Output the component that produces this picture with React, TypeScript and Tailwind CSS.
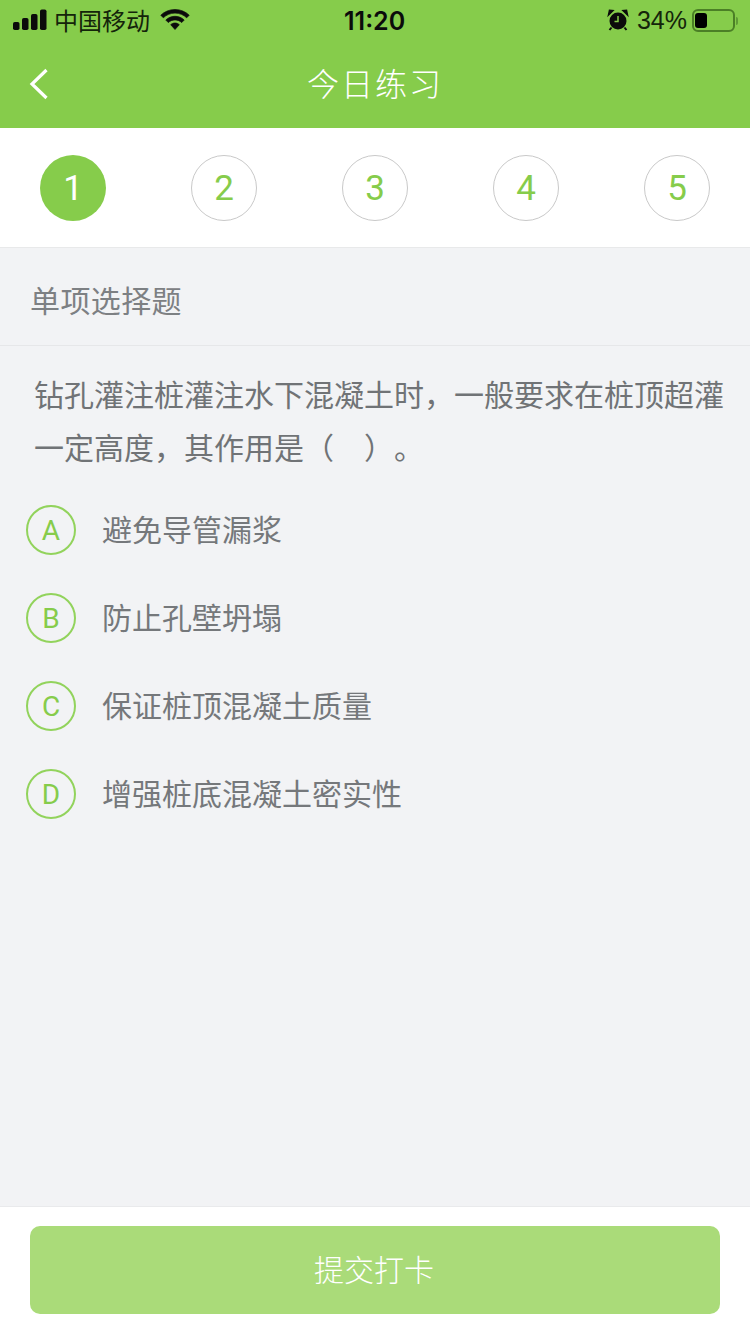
import React from "react";

const cjk = { fontFamily: '"Noto Sans CJK SC", sans-serif' };
const roboto = { fontFamily: '"Roboto", sans-serif' };

function StatusBar() {
  return (
    <div className="relative flex h-10 items-center justify-between pl-[13px] pr-[12px] text-black">
      <div className="flex items-center">
        <svg width="34" height="22" viewBox="0 0 34 22" fill="#0b0b0b" className="mr-[7px]">
          <rect x="0" y="13" width="6.500" height="8" rx="1.800" />
          <rect x="9" y="9" width="6.500" height="12" rx="1.800" />
          <rect x="18" y="5" width="6.500" height="16" rx="1.800" />
          <rect x="27" y="0.500" width="6.500" height="20.500" rx="1.800" />
        </svg>
        <span className="text-[24px] leading-none text-[#14240a]">中国移动</span>
        <svg width="30" height="22" viewBox="0 0 30 22" className="ml-[10px]" fill="#0b0b0b" stroke="#0b0b0b" strokeWidth="0.700">
          <path d="M15 0.500C9.500 0.500 4.500 2.600 0.800 6.200L3.300 8.800C6.300 5.900 10.400 4.100 15 4.100C19.600 4.100 23.700 5.900 26.700 8.800L29.200 6.200C25.500 2.600 20.500 0.500 15 0.500Z" />
          <path d="M15 7.300C11.400 7.300 8.200 8.700 5.800 11L8.300 13.600C10 11.900 12.400 10.900 15 10.900C17.600 10.900 20 11.900 21.700 13.600L24.200 11C21.800 8.700 18.600 7.300 15 7.300Z" />
          <path d="M15 14C13.300 14 11.800 14.700 10.700 15.700L15 20.500L19.300 15.700C18.200 14.700 16.700 14 15 14Z" />
        </svg>
      </div>
      <span
        className="absolute left-[344px] top-[7px] text-[25px] leading-[28px] font-semibold text-[#0b0b0b]"
        style={{ fontFamily: '"Inter", sans-serif' }}
      >
        11:20
      </span>
      <div className="flex items-center pt-[1px]">
        <svg width="22" height="22" viewBox="0 0 22 22" className="mr-[8px] -mt-[2px]">
          <circle cx="11" cy="12" r="8.500" fill="#0b0b0b" />
          <path d="M11 7V12.500H7.500" stroke="#86cc4b" strokeWidth="1.500" fill="none" />
          <path d="M1.500 6L6 1.500L2.500 1.200Z M20.500 6L16 1.500L19.500 1.200Z" fill="#0b0b0b" stroke="#0b0b0b" strokeWidth="1.500" />
          <path d="M4.500 18.500L2.500 21M17.500 18.500L19.500 21" stroke="#0b0b0b" strokeWidth="2" />
        </svg>
        <span
          className="mr-[5px] text-[25px] leading-none text-[#14240a]"
          style={{ fontFamily: '"Liberation Sans", sans-serif' }}
        >
          34%
        </span>
        <div className="flex h-[23px] w-[43px] items-center rounded-[6px] border-2 border-[#4b7f26] p-[1px]">
          <div className="h-[15px] w-[12px] rounded-[3px] bg-black" />
        </div>
        <div className="ml-[1px] h-[8px] w-[2px] rounded-r-[2px] bg-[#5f9a35]" />
      </div>
    </div>
  );
}

function NavBar() {
  return (
    <div className="relative flex h-[88px] items-center justify-center pb-[4px]">
      <svg width="22" height="34" viewBox="0 0 22 34" className="absolute left-[28px] top-[27px]" fill="none" stroke="#fff" strokeWidth="3.200">
        <path d="M18.500 3L4 17L18.500 31" />
      </svg>
      <span className="text-[32px] leading-none tracking-[2px] text-white font-light">今日练习</span>
    </div>
  );
}

function Steps() {
  const items = [1, 2, 3, 4, 5];
  return (
    <div className="flex h-[120px] items-start justify-between border-b border-[#e8e9ea] bg-white px-10 pt-[27px]">
      {items.map((n) =>
        n === 1 ? (
          <div key={n} className="flex h-[66px] w-[66px] items-center justify-center rounded-full bg-[#86cc4b] pt-[2px] text-[35px] text-white" style={roboto}>
            {n}
          </div>
        ) : (
          <div key={n} className="flex h-[66px] w-[66px] items-center justify-center rounded-full border border-[#c9c9c9] pt-[2px] text-[35px] text-[#86cc4b]" style={roboto}>
            {n}
          </div>
        )
      )}
    </div>
  );
}

const options = [
  ["A", "避免导管漏浆"],
  ["B", "防止孔壁坍塌"],
  ["C", "保证桩顶混凝土质量"],
  ["D", "增强桩底混凝土密实性"],
];

export default function App() {
  return (
    <div className="flex h-[1334px] w-[750px] flex-col overflow-hidden bg-[#f2f3f5]" style={cjk}>
      <div className="h-32 bg-[#86cc4b]">
        <StatusBar />
        <NavBar />
      </div>
      <Steps />
      <div className="flex h-[98px] items-center border-b border-[#e6e7e9] pl-[30px] pt-[4px] text-[30px] leading-none tracking-[0.4px] text-[#7d8083]">
        单项选择题
      </div>
      <div className="flex-1">
        <div className="pl-[34px] pr-[21px] pt-[21px] text-[30px] leading-[53px] text-[#707376] [text-spacing-trim:space-all]">
          钻孔灌注桩灌注水下混凝土时，一般要求在桩顶超灌一定高度，其作用是（　）。
        </div>
        <div className="mt-[32px] flex flex-col gap-[38px] pl-[26px]">
          {options.map(([k, t]) => (
            <div key={k} className="flex h-[50px] items-center gap-[26px]">
              <div className="flex h-[50px] w-[50px] items-center justify-center rounded-full border-2 border-[#92d35c] pt-[1px] text-[28px] text-[#86cc4b]" style={roboto}>
                {k}
              </div>
              <span className="pb-[4px] text-[30px] leading-none text-[#75787b]">{t}</span>
            </div>
          ))}
        </div>
      </div>
      <div className="h-[128px] border-t border-[#e9eaec] bg-white px-[30px] pt-[19px]">
        <button className="flex h-[88px] w-full items-center justify-center rounded-[10px] bg-[#aadb79] pr-[2px] pb-[4px] text-[30px] font-light text-white">
          提交打卡
        </button>
      </div>
    </div>
  );
}
